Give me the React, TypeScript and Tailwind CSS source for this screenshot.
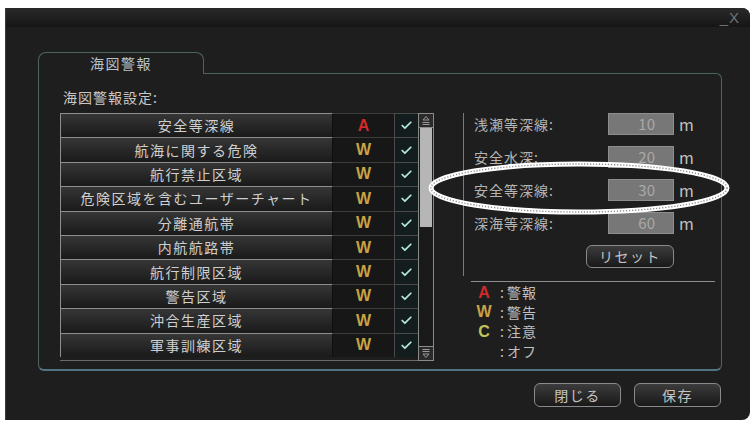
import { Check } from 'lucide-react'

const rows: [string, 'A' | 'W'][] = [
  ['安全等深線', 'A'],
  ['航海に関する危険', 'W'],
  ['航行禁止区域', 'W'],
  ['危険区域を含むユーザーチャート', 'W'],
  ['分離通航帯', 'W'],
  ['内航航路帯', 'W'],
  ['航行制限区域', 'W'],
  ['警告区域', 'W'],
  ['沖合生産区域', 'W'],
  ['軍事訓練区域', 'W'],
]

const depths = [
  ['浅瀬等深線:', '10'],
  ['安全水深:', '20'],
  ['安全等深線:', '30'],
  ['深海等深線:', '60'],
]

const legend = [
  ['A', 'text-[#d02a2a]', '警報'],
  ['W', 'text-[#c9a244]', '警告'],
  ['C', 'text-[#c3c25a]', '注意'],
  ['', '', 'オフ'],
]

function ScrollArrow({ up }: { up: boolean }) {
  return (
    <svg width="12" height="11" viewBox="0 0 12 11" fill="none" stroke="#9a9a9a" strokeWidth="1">
      {up ? (
        <>
          <path d="M3 5 L6 1.5 L9 5 Z" />
          <path d="M2.5 7.5 H9.5 M2.5 9.5 H9.5" />
        </>
      ) : (
        <>
          <path d="M2.5 1.5 H9.5 M2.5 3.5 H9.5" />
          <path d="M3 6 L6 9.5 L9 6 Z" />
        </>
      )}
    </svg>
  )
}

function Button({ label, className }: { label: string; className?: string }) {
  return (
    <div
      className={`flex items-center justify-center rounded-[6px] border border-[#8a8a8a] bg-gradient-to-b from-[#3c3c3c] to-[#191919] text-[14px] tracking-[1.5px] text-[#c4c4c4] ${className ?? ''}`}
    >
      {label}
    </div>
  )
}

export default function App() {
  return (
    <div
      className="relative h-[426px] w-[753px] overflow-hidden bg-white"
      style={{ fontFamily: '"Noto Sans CJK JP", "Noto Sans", sans-serif' }}
    >
      <div className="ml-[5px] mt-[8px] flex h-[412px] w-[745px] flex-col rounded-tr-[8px] rounded-br-[8px] border-l border-[#3a3a3a] bg-[#1e1e1e]">
        {/* title bar */}
        <div
          className="flex h-[19px] items-end justify-end rounded-tr-[8px] bg-gradient-to-b from-[#2a2a2a] to-[#151515] pr-[11px] text-[15px] leading-[18px] text-[#727272]"
          style={{ fontFamily: '"Liberation Sans", sans-serif' }}
        >
          <span className="mr-[1px]">_</span>
          <span>X</span>
        </div>

        <div className="flex flex-col pl-[32px] pt-[25px]">
          {/* tab */}
          <div className="relative z-10 -mb-px flex h-[22px] w-[166px] items-center justify-center rounded-t-[8px] border border-b-0 border-[#4a6560] bg-[#1e1e1e] text-[14px] tracking-[1.5px] text-[#b9c3cb]">
            海図警報
          </div>

          {/* group box */}
          <div className="flex h-[298px] w-[684px] flex-col rounded-tr-[6px] rounded-b-[6px] border border-b-2 border-[#4a6560] border-b-[#4f7582] pl-[21px] pt-[14px]">
            <div className="ml-[3px] h-[18px] text-[14px] leading-[18px] tracking-[1px] text-[#c8c8c8]">
              海図警報設定:
            </div>

            <div className="mt-[7px] flex">
              {/* table */}
              <div className="flex">
                <div className="flex flex-col border-b border-[#6a6a6a]">
                  {rows.map(([name, code]) => (
                    <div key={name} className="flex h-[24.4px]">
                      <div className="flex w-[273px] items-center justify-center border-t border-l border-[#8e8e8e] border-r border-r-[#0e0e0e] bg-gradient-to-b from-[#363636] to-[#1a1a1a] text-[14px] tracking-[1.5px] text-[#cfcfcf]">
                        {name}
                      </div>
                      <div
                        className={`flex w-[61px] items-center justify-center border-t border-[#3c3c3c] bg-[#171717] text-[16px] font-bold ${
                          code === 'A' ? 'text-[#d02a2a]' : 'text-[#c9a244]'
                        }`}
                        style={{ fontFamily: '"Liberation Sans", sans-serif' }}
                      >
                        {code}
                      </div>
                      <div className="flex w-[24px] items-center justify-center border-t border-l border-[#4a4a4a] bg-[#131d1d]">
                        <Check size={13} strokeWidth={3.2} color="#b4eadb" />
                      </div>
                    </div>
                  ))}
                </div>

                {/* scrollbar */}
                <div className="flex w-[16px] flex-col border border-[#8a8a8a] bg-[#1a1a1a]">
                  <div className="flex h-[14px] items-center justify-center border-b border-[#8a8a8a] bg-[#2a2a2a]">
                    <ScrollArrow up />
                  </div>
                  <div className="mx-px h-[99px] bg-[#b6b6b6]" />
                  <div className="flex-1" />
                  <div className="flex h-[14px] items-center justify-center border-t border-[#8a8a8a] bg-[#2a2a2a]">
                    <ScrollArrow up={false} />
                  </div>
                </div>
              </div>

              {/* right panel */}
              <div className="ml-[29px] mr-[6px] flex flex-1 flex-col">
                <div className="flex h-[163px] flex-col gap-[11px] border-l border-[#7a7a7a] pl-[10px]">
                  {depths.map(([label, value]) => (
                    <div key={label} className="flex h-[22px] items-center">
                      <div className="w-[134px] text-[14px] tracking-[1px] text-[#b4b4b4]">{label}</div>
                      <div className="flex h-[22px] w-[66px] items-center justify-end border border-[#8e8e8e] bg-[#777777] pr-[18px] text-[15px] text-[#a9a9a9]">
                        {value}
                      </div>
                      <div className="ml-[5px] text-[16px] text-[#c2c2c2]">m</div>
                    </div>
                  ))}
                  <Button label="リセット" className="ml-[112px] h-[23px] w-[88px]" />
                </div>

                <div className="ml-[8px] mt-[5px] h-px bg-[#8c8c8c]" />

                <div className="ml-[8px] mt-[1px] flex flex-col">
                  {legend.map(([letter, color, text]) => (
                    <div key={text} className="flex h-[19.5px] items-center text-[14px] text-[#c0c0c0]">
                      <span
                        className={`w-[26px] text-center text-[16px] font-bold ${color}`}
                        style={{ fontFamily: '"Liberation Sans", sans-serif' }}
                      >
                        {letter}
                      </span>
                      <span className="w-[10px] text-center">:</span>
                      <span className="tracking-[1px]">{text}</span>
                    </div>
                  ))}
                </div>
              </div>
            </div>
          </div>

          {/* bottom buttons */}
          <div className="mt-[12px] flex w-[684px] justify-end gap-[13px] pr-px">
            <Button label="閉じる" className="h-[24px] w-[87px]" />
            <Button label="保存" className="h-[24px] w-[87px]" />
          </div>
        </div>
      </div>

      {/* annotation ellipse */}
      <svg className="pointer-events-none absolute left-0 top-0" width="753" height="426">
        <ellipse cx="579" cy="188" rx="148" ry="24" fill="none" stroke="#ffffff" strokeWidth="5" />
        <ellipse cx="579" cy="188" rx="148" ry="24" fill="none" stroke="#8a8a8a" strokeWidth="1.4" strokeDasharray="1.2 1.8" />
      </svg>
    </div>
  )
}
